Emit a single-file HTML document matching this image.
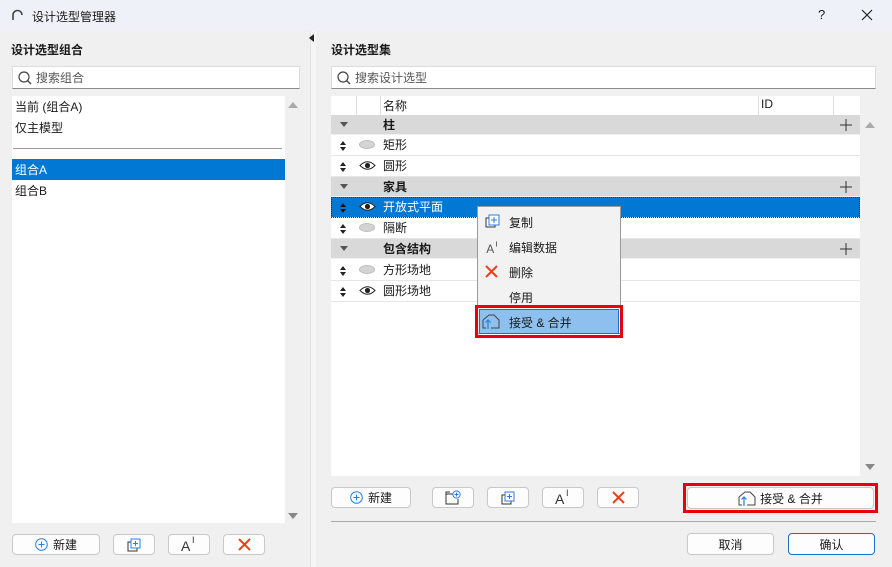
<!DOCTYPE html>
<html><head><meta charset="utf-8"><style>
*{box-sizing:border-box;margin:0;padding:0}
body{width:892px;height:567px;background:#f0f0f0;font-family:"Liberation Sans","Noto Sans CJK SC",sans-serif;font-size:12px;color:#1a1a1a;position:relative;overflow:hidden}
.a{position:absolute}
.title{left:0;top:0;width:892px;height:31px;background:#eef2f8}
.btn{position:absolute;background:#fdfdfd;border:1px solid #c8c8c8;border-radius:4px;display:flex;align-items:center;justify-content:center;gap:5px;font-size:12px}
.search{background:#fff;border:1px solid #dcdcdc;border-bottom:1px solid #8a8a8a;display:flex;align-items:center;padding-left:4px;color:#555}
.row{position:absolute;left:331px;width:529px;height:21px;border-bottom:1px solid #e6e6e6;background:#fff}
.grp{background:#d9d9d9;font-weight:bold;border-bottom:1px solid #f0f0f0}
.row span{position:absolute;top:1px}
.sel{background:#0078d4;color:#fff;outline:1px dotted #003a70;outline-offset:-1px}
.mi{position:absolute;left:509px;font-size:12px}
.ai{position:relative;display:inline-block;width:20px;height:16px}
.ai b{position:absolute;left:2px;top:1px;font-weight:normal;font-size:14px;color:#333}
.ai i{position:absolute;left:13px;top:-2px;font-style:normal;font-size:9px;color:#333}
</style></head><body>
<div class="a title"></div>
<svg class="a" style="left:11px;top:9px" width="12" height="12"><path d="M2 11 V6 A4.5 4.5 0 0 1 11 6" fill="none" stroke="#444" stroke-width="1.6"/></svg>
<div class="a" style="left:32px;top:8px;font-size:12px">设计选型管理器</div>
<div class="a" style="left:818px;top:7px;font-size:13px">?</div>
<svg class="a" style="left:861px;top:9px" width="12" height="12"><path d="M1 1L11 11M11 1L1 11" stroke="#222" stroke-width="1.2"/></svg>

<!-- left -->
<div class="a" style="left:11px;top:41px;font-weight:bold">设计选型组合</div>
<div class="a search" style="left:12px;top:66px;width:288px;height:23px"><svg width="16" height="16"><circle cx="7" cy="7" r="5" fill="none" stroke="#444" stroke-width="1.2"/><path d="M10.5 10.5L14 14" stroke="#444" stroke-width="1.3"/></svg><span style="margin-left:3px">搜索组合</span></div>
<div class="a" style="left:12px;top:96px;width:273px;height:427px;background:#fff"></div>
<div class="a" style="left:15px;top:98px">当前 (组合A)</div>
<div class="a" style="left:15px;top:119px">仅主模型</div>
<div class="a" style="left:13px;top:148px;width:269px;height:1px;background:#999"></div>
<div class="a" style="left:12px;top:159px;width:273px;height:21px;background:#0078d4"></div>
<div class="a" style="left:15px;top:161px;color:#fff">组合A</div>
<div class="a" style="left:15px;top:182px">组合B</div>
<svg class="a" style="left:288px;top:101px" width="10" height="8"><path d="M0 7L5 1L10 7Z" fill="#aaa"/></svg>
<svg class="a" style="left:288px;top:512px" width="10" height="8"><path d="M0 1L5 7L10 1Z" fill="#888"/></svg>
<div class="btn" style="left:12px;top:534px;width:88px;height:21px"><svg width="13" height="13"><circle cx="6.5" cy="6.5" r="5.8" fill="none" stroke="#2a7fe0"/><path d="M6.5 3.5V9.5M3.5 6.5H9.5" stroke="#2a7fe0"/></svg>新建</div>
<div class="btn" style="left:113px;top:534px;width:42px;height:21px"><svg width="14" height="14"><rect x="1" y="4" width="9" height="9" fill="#fff" stroke="#333"/><rect x="4" y="1" width="9" height="9" fill="#fff" stroke="#2a7fe0"/><path d="M8.5 3V8M6 5.5H11" stroke="#2a7fe0"/></svg></div>
<div class="btn" style="left:168px;top:534px;width:42px;height:21px"><span class="ai"><b>A</b><i>I</i></span></div>
<div class="btn" style="left:223px;top:534px;width:42px;height:21px"><svg width="13" height="13"><path d="M1 1L12 12M12 1L1 12" stroke="#f0401a" stroke-width="2"/></svg></div>

<!-- splitter -->
<div class="a" style="left:310px;top:31px;width:6px;height:536px;background:#f6f6f6;border-left:1px solid #e2e2e2"></div>
<svg class="a" style="left:309px;top:34px" width="6" height="8"><path d="M5 0L0 4L5 8Z" fill="#222"/></svg>

<!-- right -->
<div class="a" style="left:331px;top:41px;font-weight:bold">设计选型集</div>
<div class="a search" style="left:331px;top:66px;width:545px;height:23px"><svg width="16" height="16"><circle cx="7" cy="7" r="5" fill="none" stroke="#444" stroke-width="1.2"/><path d="M10.5 10.5L14 14" stroke="#444" stroke-width="1.3"/></svg><span style="margin-left:3px">搜索设计选型</span></div>
<div class="a" style="left:331px;top:96px;width:529px;height:380px;background:#fff"></div>
<div class="a" style="left:356px;top:96px;width:1px;height:19px;background:#ddd"></div>
<div class="a" style="left:380px;top:96px;width:1px;height:19px;background:#ddd"></div>
<div class="a" style="left:758px;top:96px;width:1px;height:19px;background:#ddd"></div>
<div class="a" style="left:833px;top:96px;width:1px;height:19px;background:#ddd"></div>
<div class="a" style="left:383px;top:97px">名称</div>
<div class="a" style="left:761px;top:97px">ID</div>
<svg class="a" style="left:865px;top:121px" width="10" height="8"><path d="M0 7L5 1L10 7Z" fill="#aaa"/></svg>
<svg class="a" style="left:865px;top:463px" width="10" height="8"><path d="M0 1L5 7L10 1Z" fill="#888"/></svg>

<div class="row grp" style="top:115px;height:20px"><span style="left:9px;top:7px;border:4px solid transparent;border-top:5px solid #555;width:0;height:0"></span><span style="left:52px;top:1px">柱</span><svg style="position:absolute;left:509px;top:4px" width="12" height="12"><path d="M6 0V12M0 6H12" stroke="#333"/></svg></div>
<div class="row" style="top:135px"><svg style="position:absolute;left:9px;top:6px" width="6" height="10"><path d="M0 4L3 0L6 4ZM0 6L3 10L6 6Z" fill="#222"/></svg><span style="left:28px;top:5px;width:16px;height:9px;border-radius:50%;background:#d4d4d4;border:1px solid #bbb"></span><span style="left:52px">矩形</span></div>
<div class="row" style="top:156px"><svg style="position:absolute;left:9px;top:6px" width="6" height="10"><path d="M0 4L3 0L6 4ZM0 6L3 10L6 6Z" fill="#222"/></svg><svg style="position:absolute;left:28px;top:4px" width="17" height="11"><path d="M1 5.5Q8.5 -2 16 5.5Q8.5 13 1 5.5Z" fill="#fff" stroke="#222"/><circle cx="8.5" cy="5.5" r="2.6" fill="#222"/></svg><span style="left:52px">圆形</span></div>
<div class="row grp" style="top:177px;height:20px"><span style="left:9px;top:7px;border:4px solid transparent;border-top:5px solid #555;width:0;height:0"></span><span style="left:52px;top:1px">家具</span><svg style="position:absolute;left:509px;top:4px" width="12" height="12"><path d="M6 0V12M0 6H12" stroke="#333"/></svg></div>
<div class="row sel" style="top:197px"><svg style="position:absolute;left:9px;top:6px" width="6" height="10"><path d="M0 4L3 0L6 4ZM0 6L3 10L6 6Z" fill="#111"/></svg><svg style="position:absolute;left:28px;top:4px" width="17" height="11"><path d="M1 5.5Q8.5 -2 16 5.5Q8.5 13 1 5.5Z" fill="#fff" stroke="#222"/><circle cx="8.5" cy="5.5" r="2.6" fill="#222"/></svg><span style="left:52px">开放式平面</span></div>
<div class="row" style="top:218px"><svg style="position:absolute;left:9px;top:6px" width="6" height="10"><path d="M0 4L3 0L6 4ZM0 6L3 10L6 6Z" fill="#222"/></svg><span style="left:28px;top:5px;width:16px;height:9px;border-radius:50%;background:#d4d4d4;border:1px solid #bbb"></span><span style="left:52px">隔断</span></div>
<div class="row grp" style="top:239px;height:20px"><span style="left:9px;top:7px;border:4px solid transparent;border-top:5px solid #555;width:0;height:0"></span><span style="left:52px;top:1px">包含结构</span><svg style="position:absolute;left:509px;top:4px" width="12" height="12"><path d="M6 0V12M0 6H12" stroke="#333"/></svg></div>
<div class="row" style="top:260px"><svg style="position:absolute;left:9px;top:6px" width="6" height="10"><path d="M0 4L3 0L6 4ZM0 6L3 10L6 6Z" fill="#222"/></svg><span style="left:28px;top:5px;width:16px;height:9px;border-radius:50%;background:#d4d4d4;border:1px solid #bbb"></span><span style="left:52px">方形场地</span></div>
<div class="row" style="top:281px"><svg style="position:absolute;left:9px;top:6px" width="6" height="10"><path d="M0 4L3 0L6 4ZM0 6L3 10L6 6Z" fill="#222"/></svg><svg style="position:absolute;left:28px;top:4px" width="17" height="11"><path d="M1 5.5Q8.5 -2 16 5.5Q8.5 13 1 5.5Z" fill="#fff" stroke="#222"/><circle cx="8.5" cy="5.5" r="2.6" fill="#222"/></svg><span style="left:52px">圆形场地</span></div>

<!-- context menu -->
<div class="a" style="left:477px;top:206px;width:144px;height:128px;background:#f2f2f2;border:1px solid #999"></div>
<svg class="a" style="left:485px;top:214px" width="15" height="15"><rect x="1" y="4" width="9" height="9" fill="#fff" stroke="#333"/><rect x="4" y="1" width="10" height="10" fill="#fff" stroke="#2a7fe0"/><path d="M9 3V9M6 6H12" stroke="#2a7fe0"/></svg>
<div class="mi" style="top:214px">复制</div>
<div class="a" style="left:483px;top:240px"><span class="ai" style="transform:scale(.85)"><b style="color:#555">A</b><i>I</i></span></div>
<div class="mi" style="top:239px">编辑数据</div>
<svg class="a" style="left:485px;top:265px" width="13" height="13"><path d="M1 1L12 12M12 1L1 12" stroke="#f0401a" stroke-width="2"/></svg>
<div class="mi" style="top:264px">删除</div>
<div class="mi" style="top:289px">停用</div>
<div class="a" style="left:475px;top:305px;width:148px;height:33px;border:3px solid #e8000b"></div>
<div class="a" style="left:479px;top:309px;width:140px;height:25px;background:#8dc0ef;border:1px solid #1a70c8"></div>
<svg class="a" style="left:482px;top:312px" width="20" height="18"><path d="M1 8L7 3L12 3L17 8V16H9M1 8V16H4" fill="none" stroke="#444"/><path d="M6 17V8M3.5 10.5L6 8L8.5 10.5" fill="none" stroke="#2a7fe0" stroke-width="1.2"/></svg>
<div class="mi" style="top:314px">接受 &amp; 合并</div>

<!-- right bottom buttons -->
<div class="btn" style="left:331px;top:487px;width:80px;height:21px"><svg width="13" height="13"><circle cx="6.5" cy="6.5" r="5.8" fill="none" stroke="#2a7fe0"/><path d="M6.5 3.5V9.5M3.5 6.5H9.5" stroke="#2a7fe0"/></svg>新建</div>
<div class="btn" style="left:432px;top:487px;width:42px;height:21px"><svg width="16" height="15"><path d="M1 4H9M1 4V14H13V9M1 4V2H5" fill="none" stroke="#333"/><circle cx="11.5" cy="4.5" r="3.6" fill="#fff" stroke="#2a7fe0"/><path d="M11.5 2.5V6.5M9.5 4.5H13.5" stroke="#2a7fe0"/></svg></div>
<div class="btn" style="left:487px;top:487px;width:42px;height:21px"><svg width="14" height="14"><rect x="1" y="4" width="9" height="9" fill="#fff" stroke="#333"/><rect x="4" y="1" width="9" height="9" fill="#fff" stroke="#2a7fe0"/><path d="M8.5 3V8M6 5.5H11" stroke="#2a7fe0"/></svg></div>
<div class="btn" style="left:542px;top:487px;width:42px;height:21px"><span class="ai"><b>A</b><i>I</i></span></div>
<div class="btn" style="left:597px;top:487px;width:42px;height:21px"><svg width="13" height="13"><path d="M1 1L12 12M12 1L1 12" stroke="#f0401a" stroke-width="2"/></svg></div>
<div class="a" style="left:683px;top:483px;width:195px;height:30px;border:3px solid #e8000b"></div>
<div class="btn" style="left:687px;top:487px;width:187px;height:22px;gap:2px"><svg width="20" height="18"><path d="M1 8L7 3L12 3L17 8V16H9M1 8V16H4" fill="none" stroke="#444"/><path d="M6 17V8M3.5 10.5L6 8L8.5 10.5" fill="none" stroke="#2a7fe0" stroke-width="1.2"/></svg>接受 &amp; 合并</div>
<div class="a" style="left:331px;top:521px;width:545px;height:1px;background:#aaa"></div>
<div class="btn" style="left:687px;top:533px;width:87px;height:22px">取消</div>
<div class="btn" style="left:788px;top:533px;width:87px;height:22px;border-color:#1a70c8">确认</div>
</body></html>
